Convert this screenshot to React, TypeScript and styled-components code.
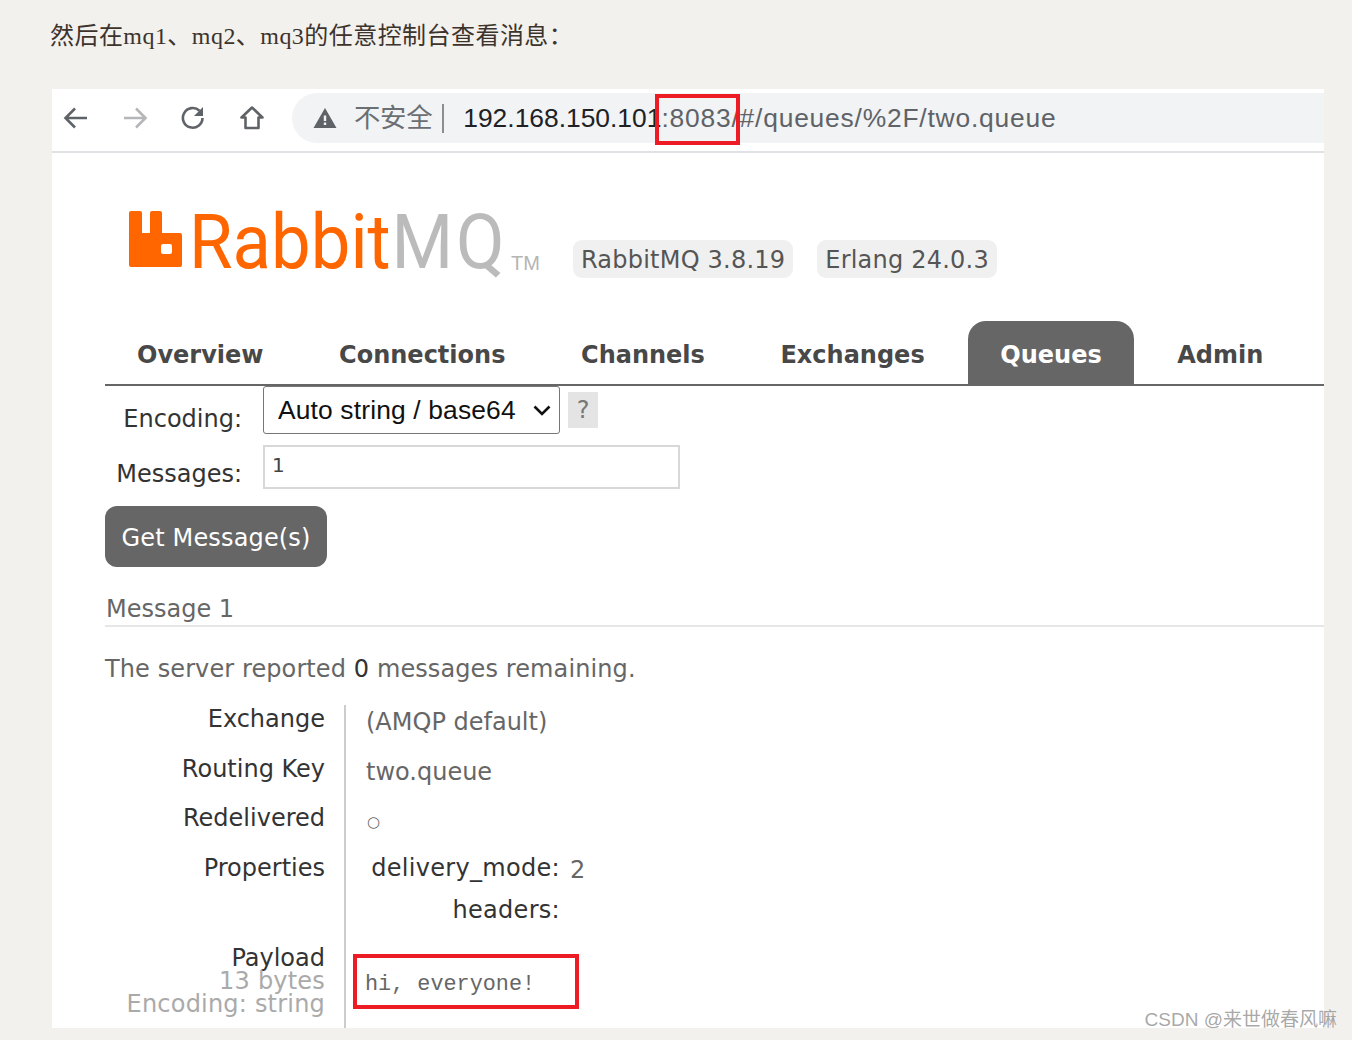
import React from 'react';
import styled, { createGlobalStyle } from 'styled-components';

const sans = '"DejaVu Sans", Verdana, sans-serif';
const arial = '"Liberation Sans", "Noto Sans CJK SC", Arial, sans-serif';

const Global = createGlobalStyle`
  html, body { margin: 0; padding: 0; background: #f3f1ee; }
  * { box-sizing: border-box; }
`;

const Page = styled.div`
  position: relative;
  height: 1040px;
  overflow: hidden;
  padding: 0 28px 12px 52px;
  background: #f3f1ee;
`;

const Intro = styled.p`
  margin: 0 0 0 -2px;
  height: 89px;
  padding-top: 21px;
  font: 24px/30px "Liberation Serif", "Noto Sans CJK SC", serif;
  letter-spacing: 0.45px;
  color: #3c342c;
`;

const Shot = styled.div`
  height: 939px;
  overflow: hidden;
  background: #fff;
`;

const Toolbar = styled.div`
  display: flex;
  align-items: center;
  height: 64px;
  padding: 5px 0 9px 10px;
  border-bottom: 2px solid #dfe1e5;
`;

const NavIcon = styled.svg<{ $dim?: boolean }>`
  flex: none;
  width: 28px;
  height: 28px;
  margin-right: 30.6px;
  fill: none;
  stroke: ${p => (p.$dim ? '#b4b6b9' : '#5f6368')};
  stroke-width: 2.6;
`;

const Omnibox = styled.div`
  position: relative;
  flex: 1;
  display: flex;
  align-items: center;
  height: 50px;
  margin-left: -4.400px;
  padding-left: 21px;
  background: #f1f3f4;
  border-radius: 25px 0 0 25px;
  font: 26.4px/50px ${arial};
  white-space: nowrap;
`;

const Warning = styled.svg`
  flex: none;
  width: 24px;
  height: 22px;
  margin-right: 17px;
  fill: #5f6368;
`;

const Insecure = styled.span`
  color: #6b6e72;
  letter-spacing: -0.3px;
`;

const Divider = styled.span`
  width: 2px;
  height: 29px;
  margin: 0 19px 0 10px;
  background: #8a8d91;
`;

const Host = styled.span`
  color: #202124;
`;

const UrlRest = styled.span`
  color: #5f6368;
  letter-spacing: 0.8px;
`;

const PortMark = styled.span`
  position: absolute;
  left: 363px;
  top: 1px;
  width: 85px;
  height: 51px;
  border: 4px solid #ed1c24;
`;

const Masthead = styled.div`
  display: flex;
  align-items: flex-start;
  height: 168px;
  padding: 52px 0 0 77px;
`;

const LogoMark = styled.svg`
  flex: none;
  width: 53px;
  height: 56px;
  margin-top: 6px;
  fill: #ff6600;
`;

const Wordmark = styled.div`
  flex: none;
  width: 322px;
  margin-left: 7px;
  font: 400 76px/74px "Roboto", ${arial};
  transform: scaleX(0.93);
  transform-origin: left center;
  white-space: nowrap;
  color: #ff6600;
`;

const MQ = styled.span`
  margin-left: 1px;
  letter-spacing: 3px;
  color: #bbbbbb;
`;

const Trademark = styled.span`
  flex: none;
  width: 62px;
  margin-top: 47px;
  font: 20px/22px ${arial};
  color: #b5b5b5;
`;

const Badge = styled.span`
  flex: none;
  height: 38px;
  margin: 35px 24px 0 0;
  padding: 0 8px;
  border-radius: 9px;
  background: #f0f0f0;
  font: 24px/40px ${sans};
  letter-spacing: 0.22px;
  color: #555;
`;

const Body = styled.div`
  padding-left: 53px;
`;

const Tabs = styled.nav`
  display: flex;
  height: 65px;
  border-bottom: 2px solid #666;
`;

const Tab = styled.span<{ $active?: boolean }>`
  height: 64px;
  margin-right: 11.6px;
  padding: 0 32px;
  border-radius: 18px 18px 0 0;
  background: ${p => (p.$active ? '#666' : 'transparent')};
  font: bold 24px/68px ${sans};
  color: ${p => (p.$active ? '#fff' : '#484848')};
`;

const FormRow = styled.div<{ $height: number }>`
  display: flex;
  align-items: flex-start;
  height: ${p => p.$height}px;
`;

const FormLabel = styled.label<{ $top: number }>`
  flex: none;
  width: 137px;
  margin-right: 21px;
  padding-top: ${p => p.$top}px;
  text-align: right;
  font: 24px/30px ${sans};
  color: #333;
`;

const SelectFrame = styled.div`
  position: relative;
  width: 297px;
  height: 48px;
`;

const EncodingSelect = styled.select`
  appearance: none;
  display: block;
  width: 100%;
  height: 100%;
  padding: 0 4px 0 14px;
  border: 1px solid #767676;
  border-radius: 3px;
  background: #fff;
  font: 26.4px ${arial};
  letter-spacing: 0.15px;
  color: #111;
`;

const Chevron = styled.svg`
  position: absolute;
  right: 9px;
  top: 19px;
  width: 18px;
  height: 11px;
  fill: none;
  stroke: #111;
  stroke-width: 2.6;
  pointer-events: none;
`;

const Help = styled.span`
  width: 30px;
  height: 36px;
  margin: 6px 0 0 8px;
  background: #e4e4e4;
  text-align: center;
  font: 24px/37px ${sans};
  color: #777;
`;

const CountInput = styled.input`
  width: 417px;
  height: 44px;
  padding: 0 7px 4px;
  border: 2px solid #d8d8d8;
  background: #fff;
  font: 20px ${sans};
  color: #444;
  outline: none;
`;

const GetButton = styled.button`
  display: block;
  width: 222px;
  height: 61px;
  padding: 3px 0 0;
  border: 0;
  border-radius: 12px;
  background: #666;
  font: 24px ${sans};
  letter-spacing: 0.16px;
  color: #fff;
`;

const SectionTitle = styled.h3`
  height: 60px;
  margin: 0;
  padding: 27px 0 0 1px;
  border-bottom: 2px solid #e6e6e6;
  font: 24px/30px ${sans};
  color: #666;
`;

const Remaining = styled.p`
  height: 78px;
  margin: 0;
  padding-top: 27px;
  font: 24px/30px ${sans};
  letter-spacing: 0.1px;
  color: #666;
`;

const Strong = styled.span`
  color: #333;
`;

const Detail = styled.div`
  display: grid;
  grid-template-columns: 241px 1fr;
  grid-auto-rows: 49.7px;
`;

const Key = styled.div`
  padding: 0 19px 0 0;
  border-right: 2px solid #ccc;
  text-align: right;
  font: 24px/28px ${sans};
  color: #333;
`;

const Val = styled.div`
  padding: 3px 0 0 20px;
  font: 24px/28px ${sans};
  color: #666;
`;

const Flag = styled.span`
  font-size: 15px;
  line-height: 22px;
  vertical-align: 2px;
  margin-left: 1px;
`;

const PropsTable = styled.div`
  display: grid;
  grid-template-columns: 190px auto;
  justify-content: start;
  grid-auto-rows: 42px;
  margin: -3px 0 0 4px;
`;

const PropKey = styled.span`
  text-align: right;
  white-space: nowrap;
  font: 24px/28px ${sans};
  letter-spacing: 0.3px;
  color: #333;
`;

const PropVal = styled.span`
  padding: 2px 0 0 10px;
  font: 24px/28px ${sans};
  color: #666;
`;

const PayloadKey = styled(Key)`
  grid-row: span 3;
  padding-top: 43px;
  line-height: 23px;
`;

const Hint = styled.div`
  letter-spacing: 0.2px;
  color: #aaa;
`;

const PayloadCell = styled.div`
  grid-row: span 3;
`;

const PayloadBox = styled.div`
  width: 226px;
  height: 55px;
  margin: 50px 0 0 7px;
  padding: 3px 8px 0;
  border: 4px solid #ed1c24;
  font: 21.8px/47px "Liberation Mono", monospace;
  white-space: pre;
  color: #666;
`;

const Watermark = styled.div`
  position: absolute;
  right: 15px;
  top: 1007px;
  font: 19px/26px ${arial};
  color: rgba(130, 130, 130, 0.7);
`;

export default function App() {
  return (
    <Page>
      <Global />
      <Intro>然后在mq1、mq2、mq3的任意控制台查看消息：</Intro>
      <Shot>
        <Toolbar>
          <NavIcon viewBox="0 0 28 28"><path d="M25 14H4M13 4.500 3.500 14l9.500 9.500" /></NavIcon>
          <NavIcon viewBox="0 0 28 28" $dim><path d="M3 14h21M15 4.500l9.500 9.500-9.500 9.500" /></NavIcon>
          <NavIcon viewBox="0 0 28 28"><path d="M23.500 14A9.800 9.800 0 1 1 20.500 6.800" /><path d="M24 3v9h-9" fill="#5f6368" stroke="none" /></NavIcon>
          <NavIcon viewBox="0 0 28 28"><path d="M14 3.500 3.500 13.500h4v10.500h13V13.500h4z" strokeLinejoin="round" /></NavIcon>
          <Omnibox>
            <Warning viewBox="0 0 24 22"><path d="M12 1 .5 21h23zM13.200 18h-2.400v-2.400h2.400zm0-4h-2.400V8.500h2.400z" fillRule="evenodd" /></Warning>
            <Insecure>不安全</Insecure>
            <Divider />
            <Host>192.168.150.101</Host>
            <UrlRest>:8083/#/queues/%2F/two.queue</UrlRest>
            <PortMark />
          </Omnibox>
        </Toolbar>
        <Masthead>
          <LogoMark viewBox="0 0 53 56">
            <path fillRule="evenodd" d="M2 0h9a2 2 0 0 1 2 2v20h8V2a2 2 0 0 1 2-2h8a2 2 0 0 1 2 2v20h18a2 2 0 0 1 2 2v30a2 2 0 0 1-2 2H2a2 2 0 0 1-2-2V2a2 2 0 0 1 2-2zM34 33a2 2 0 0 0-2 2v6a2 2 0 0 0 2 2h7a2 2 0 0 0 2-2v-6a2 2 0 0 0-2-2z" />
          </LogoMark>
          <Wordmark>Rabbit<MQ>MQ</MQ></Wordmark>
          <Trademark>TM</Trademark>
          <Badge>RabbitMQ 3.8.19</Badge>
          <Badge>Erlang 24.0.3</Badge>
        </Masthead>
        <Body>
          <Tabs>
            <Tab>Overview</Tab>
            <Tab>Connections</Tab>
            <Tab>Channels</Tab>
            <Tab>Exchanges</Tab>
            <Tab $active>Queues</Tab>
            <Tab>Admin</Tab>
          </Tabs>
          <FormRow $height={59}>
            <FormLabel $top={18}>Encoding:</FormLabel>
            <SelectFrame>
              <EncodingSelect defaultValue="auto">
                <option value="auto">Auto string / base64</option>
              </EncodingSelect>
              <Chevron viewBox="0 0 18 11"><path d="M1.500 1.500 9 9l7.500-7.500" /></Chevron>
            </SelectFrame>
            <Help>?</Help>
          </FormRow>
          <FormRow $height={61}>
            <FormLabel $top={14}>Messages:</FormLabel>
            <CountInput readOnly value="1" />
          </FormRow>
          <GetButton>Get Message(s)</GetButton>
          <SectionTitle>Message 1</SectionTitle>
          <Remaining>The server reported <Strong>0</Strong> messages remaining.</Remaining>
          <Detail>
            <Key>Exchange</Key>
            <Val>(AMQP default)</Val>
            <Key>Routing Key</Key>
            <Val>two.queue</Val>
            <Key>Redelivered</Key>
            <Val><Flag>○</Flag></Val>
            <Key>Properties</Key>
            <Val>
              <PropsTable>
                <PropKey>delivery_mode:</PropKey>
                <PropVal>2</PropVal>
                <PropKey>headers:</PropKey>
                <PropVal />
              </PropsTable>
            </Val>
            <PayloadKey>
              Payload
              <Hint>13 bytes</Hint>
              <Hint>Encoding: string</Hint>
            </PayloadKey>
            <PayloadCell>
              <PayloadBox>hi, everyone!</PayloadBox>
            </PayloadCell>
          </Detail>
        </Body>
      </Shot>
      <Watermark>CSDN @来世做春风嘛</Watermark>
    </Page>
  );
}
